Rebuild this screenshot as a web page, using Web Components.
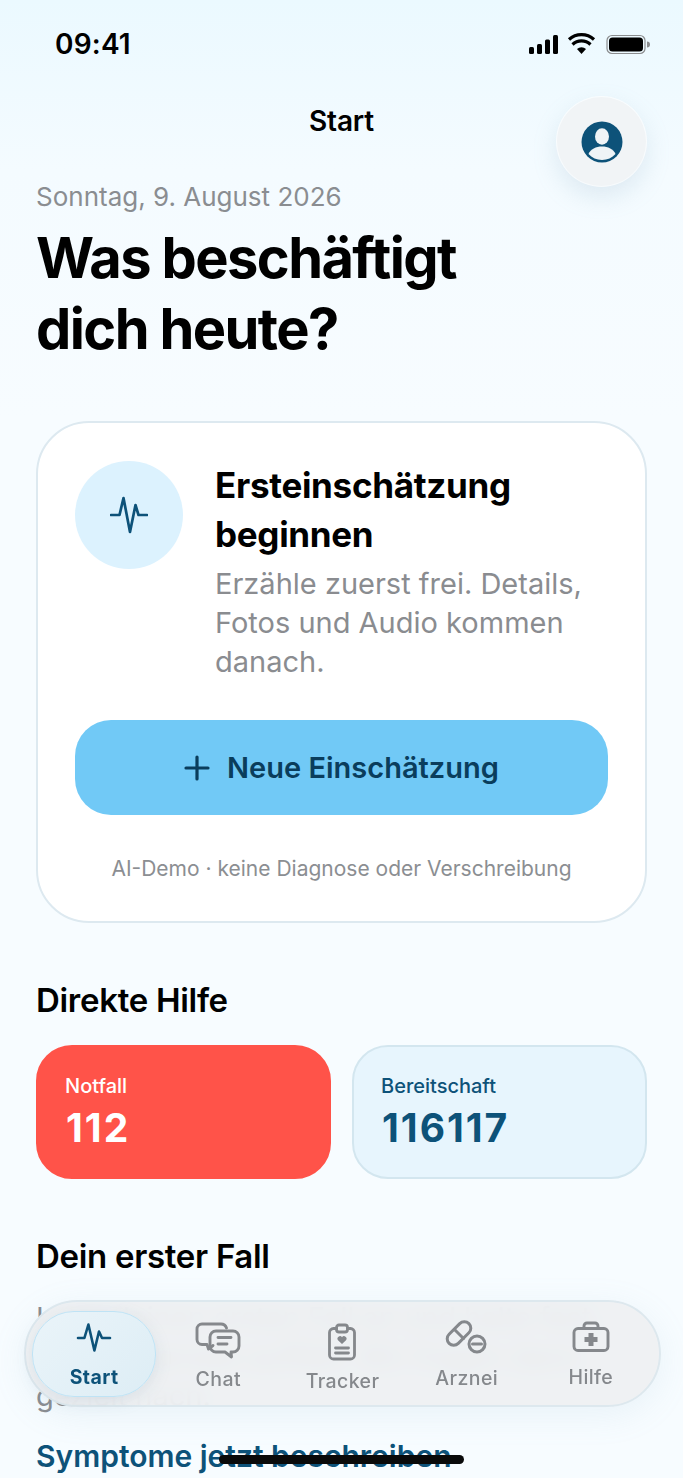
<!DOCTYPE html>
<html lang="de">
<head>
<meta charset="utf-8">
<title>Start</title>
<style>
  html, body { margin: 0; height: 100%; }
  body {
    font-family: Inter, "Liberation Sans", sans-serif;
    background: #f7fcff;
    overflow: hidden;
  }
</style>
</head>
<body>
<app-shell>
  <status-bar slot="top"></status-bar>
  <top-bar slot="top" heading="Start"></top-bar>

  <day-heading date="Sonntag, 9. August 2026">Was beschäftigt<br>dich heute?</day-heading>

  <triage-card title-text="Ersteinschätzung beginnen" note="AI-Demo · keine Diagnose oder Verschreibung" action="Neue Einschätzung">
    Erzähle zuerst frei. Details, Fotos und Audio kommen danach.
  </triage-card>

  <section-title style="margin-top:52px">Direkte Hilfe</section-title>
  <help-row>
    <help-tile kind="danger" label="Notfall" number="112"></help-tile>
    <help-tile label="Bereitschaft" number="116117"></help-tile>
  </help-row>

  <section-title style="margin-top:52px">Dein erster Fall</section-title>
  <first-case link="Symptome jetzt beschreiben">Lege deinen ersten Fall an und halte fest, was dir gerade auffällt. Wir fragen dann gezielt nach.</first-case>

  <tab-bar slot="over">
    <tab-item label="Start" icon="pulse" active></tab-item>
    <tab-item label="Chat" icon="chat" style="--shift:2px"></tab-item>
    <tab-item label="Tracker" icon="tracker" style="--shift:4px"></tab-item>
    <tab-item label="Arznei" icon="pill" style="--shift:1px"></tab-item>
    <tab-item label="Hilfe" icon="kit"></tab-item>
  </tab-bar>
  <div slot="over" style="position:absolute;left:219px;top:1455px;width:245px;height:9px;border-radius:5px;background:#0a0a0a"></div>
</app-shell>

<script>
const ICONS = {
  pulse: '<path d="M2 17.5h6.4L12.4 4l6 26 4.6-19 3 6.5H34" fill="none" stroke="currentColor" stroke-width="2.6" stroke-linecap="round" stroke-linejoin="round"/>',
  chat: '<g fill="none" stroke="currentColor" stroke-width="2.9" stroke-linejoin="round" stroke-linecap="round"><path d="M18 23.5l-4.500 3.500 -1.500-4.500H7a5 5 0 0 1-5-5V7a5 5 0 0 1 5-5h19a6 6 0 0 1 5.500 4"/><path d="M21 9h17a6 6 0 0 1 6 6v9a6 6 0 0 1-6 6h-2l.5 5-6.500-5H21a6 6 0 0 1-6-6v-9a6 6 0 0 1 6-6z"/><path d="M23 15.500h13M23 22h9"/></g>',
  tracker: '<g fill="none" stroke="currentColor" stroke-width="2.8" stroke-linecap="round" stroke-linejoin="round"><path d="M9 5.500H6a4 4 0 0 0-4 4V32a4 4 0 0 0 4 4h17a4 4 0 0 0 4-4V9.500a4 4 0 0 0-4-4h-3"/><rect x="9" y="2" width="11" height="7" rx="2.500"/><path d="M8 25h13M8 30h13"/></g><path d="M14.500 21l-4-3.800a2.500 2.500 0 0 1 4-3 2.500 2.500 0 0 1 4 3z" fill="currentColor"/>',
  pill: '<g fill="none" stroke="currentColor" stroke-width="3" stroke-linecap="round"><rect x="-2" y="7" width="28" height="13" rx="6.500" transform="rotate(-45 12 13.500)"/><path d="M7.500 9.500l9 9"/><circle cx="30" cy="24" r="8"/><path d="M25.500 24h9"/></g>',
  kit: '<g fill="none" stroke="currentColor" stroke-width="2.9" stroke-linejoin="round"><rect x="2" y="7.500" width="34" height="22" rx="4"/><path d="M12 7.500V5a3 3 0 0 1 3-3h8a3 3 0 0 1 3 3v2.500"/></g><path d="M16.500 12h5v4h4v5h-4v4h-5v-4h-4v-5h4z" fill="currentColor"/>'
};

class AppShell extends HTMLElement {
  constructor() {
    super();
    this.attachShadow({ mode: 'open' });
    this.shadowRoot.innerHTML = `
      <style>
        :host { display: block; position: relative; width: 683px; height: 1478px; overflow: hidden;
          background: linear-gradient(#ebf9ff 0, #f4fbff 170px, #f7fcff 420px); }
        .head { display: block; }
        main { padding: 0 36px; }
      </style>
      <div class="head"><slot name="top"></slot></div>
      <main><slot></slot></main>
      <slot name="over"></slot>`;
  }
}

class StatusBar extends HTMLElement {
  constructor() {
    super();
    this.attachShadow({ mode: 'open' });
    this.shadowRoot.innerHTML = `
      <style>
        :host { display: flex; justify-content: space-between; align-items: center; height: 87px; padding: 0 32px 0 55px; box-sizing: border-box; }
        time { font-size: 28px; font-weight: 600; color: #000; letter-spacing: .2px; }
        svg { display: block; }
      </style>
      <time>09:41</time>
      <svg width="123" height="22" viewBox="0 0 123 22">
        <g fill="#000">
          <rect x="1" y="14" width="5" height="7" rx="1.500"/><rect x="9" y="11" width="5" height="10" rx="1.500"/>
          <rect x="17" y="6.500" width="5" height="14.500" rx="1.500"/><rect x="25" y="2" width="5" height="19" rx="1.500"/>
          <path d="M53.500 21l-4.500-5a6.500 6.500 0 0 1 9 0z"/>
        </g>
        <g fill="none" stroke="#000" stroke-width="3.200">
          <path d="M44.500 11.500a13 13 0 0 1 18 0"/><path d="M41 6.500a18.500 18.500 0 0 1 25 0"/>
        </g>
        <rect x="79" y="2.500" width="38" height="18" rx="5" fill="none" stroke="#8b8d8f" stroke-width="1.200"/>
        <rect x="81" y="4.500" width="34" height="14" rx="3.500" fill="#000"/>
        <path d="M119 8.500a3 3 0 0 1 0 6z" fill="#8b8d8f"/>
      </svg>`;
  }
}

class TopBar extends HTMLElement {
  constructor() {
    super();
    this.attachShadow({ mode: 'open' });
    this.shadowRoot.innerHTML = `
      <style>
        :host { display: block; position: relative; height: 78px; text-align: center; }
        h1 { margin: 0; font-size: 28px; line-height: 68px; font-weight: 600; color: #000; letter-spacing: -.2px; }
        button { position: absolute; right: 37px; top: 10px; width: 89px; height: 89px; padding: 0; border: 0; border-radius: 50%;
          background: #f1f4f6; box-shadow: 0 0 0 1px rgba(255,255,255,.7), 0 10px 26px rgba(120,160,185,.2); display: grid; place-items: center; }
      </style>
      <h1></h1>
      <button aria-label="Profil">
        <svg width="42" height="42" viewBox="0 0 42 42">
          <circle cx="21" cy="21" r="20.500" fill="#0d5279"/>
          <ellipse cx="21" cy="15.500" rx="7" ry="8.200" fill="#eef3f6"/>
          <path d="M7.500 33c2-5 7.500-7.500 13.500-7.500S32.500 28 34.500 33c-3.500 3.800-8 6-13.500 6S11 36.800 7.500 33z" fill="#eef3f6"/>
        </svg>
      </button>`;
    this.shadowRoot.querySelector('h1').textContent = this.getAttribute('heading');
  }
}

class DayHeading extends HTMLElement {
  constructor() {
    super();
    this.attachShadow({ mode: 'open' });
    this.shadowRoot.innerHTML = `
      <style>
        :host { display: block; padding-top: 14px; }
        p { margin: 0; font-size: 26px; line-height: 36px; color: #8a8d91; }
        h2 { margin: 8px 0 0; font-size: 56px; line-height: 71px; font-weight: 700; letter-spacing: -1.6px; color: #000; }
      </style>
      <p></p>
      <h2><slot></slot></h2>`;
    this.shadowRoot.querySelector('p').textContent = this.getAttribute('date');
  }
}

class TriageCard extends HTMLElement {
  constructor() {
    super();
    this.attachShadow({ mode: 'open' });
    this.shadowRoot.innerHTML = `
      <style>
        :host { display: block; margin-top: 56px; box-sizing: border-box; height: 502px; padding: 38px 37px 0;
          background: #fff; border: 2px solid #dde9f0; border-radius: 53px; }
        .top { display: flex; gap: 32px; }
        .bubble { flex: none; width: 108px; height: 108px; border-radius: 50%; background: #dcf2fe; display: grid; place-items: center; }
        h3 { margin: 0; font-size: 35px; line-height: 49px; font-weight: 700; letter-spacing: -.3px; color: #000; }
        p { margin: 5px 0 0; font-size: 29px; line-height: 39px; color: #8a8c90; }
        button { display: flex; align-items: center; justify-content: center; gap: 17px; width: 100%; height: 95px; margin-top: 39px; border: 0; border-radius: 36px;
          background: #71c9f6; color: #0a3d5c; font: 600 29px Inter, "Liberation Sans", sans-serif; }
        small { display: block; margin-top: 41px; text-align: center; font-size: 21px; line-height: 26px; color: #8b8e92; }
      </style>
      <div class="top">
        <div class="bubble">
          <svg width="38" height="38" viewBox="0 0 38 38"><path d="M1 19h8.500l4-17 6.500 34 5.500-27 3 10h8.500" fill="none" stroke="#0d5279" stroke-width="2.700" stroke-linecap="round" stroke-linejoin="round"/></svg>
        </div>
        <div>
          <h3></h3>
          <p><slot></slot></p>
        </div>
      </div>
      <button>
        <svg width="26" height="26" viewBox="0 0 26 26"><path d="M13 2v22M2 13h22" stroke="#0a3d5c" stroke-width="3.200" stroke-linecap="round"/></svg>
        <span></span>
      </button>
      <small></small>`;
    this.shadowRoot.querySelector('h3').textContent = this.getAttribute('title-text');
    this.shadowRoot.querySelector('button span').textContent = this.getAttribute('action');
    this.shadowRoot.querySelector('small').textContent = this.getAttribute('note');
  }
}

class SectionTitle extends HTMLElement {
  constructor() {
    super();
    this.attachShadow({ mode: 'open' });
    this.shadowRoot.innerHTML = `
      <style>:host { display: block; font-size: 33px; line-height: 50px; font-weight: 600; letter-spacing: -.3px; color: #000; }</style>
      <slot></slot>`;
  }
}

class HelpRow extends HTMLElement {
  constructor() {
    super();
    this.attachShadow({ mode: 'open' });
    this.shadowRoot.innerHTML = `
      <style>:host { display: grid; grid-template-columns: 1fr 1fr; gap: 21px; margin-top: 20px; }</style>
      <slot></slot>`;
  }
}

class HelpTile extends HTMLElement {
  constructor() {
    super();
    this.attachShadow({ mode: 'open' });
    this.shadowRoot.innerHTML = `
      <style>
        :host { display: block; box-sizing: border-box; height: 134px; padding: 26px 27px 0; border-radius: 36px;
          background: #e7f5fd; border: 2px solid #d3e6ef; color: #0d5279; }
        :host([kind=danger]) { background: #ff5349; border-color: #ff5349; color: #fff; }
        div { font-size: 20px; line-height: 27px; font-weight: 500; }
        strong { display: block; margin: 4px 0 0 1px; font-size: 39px; line-height: 48px; font-weight: 700; letter-spacing: 2px; }
      </style>
      <div></div>
      <strong></strong>`;
    this.shadowRoot.querySelector('div').textContent = this.getAttribute('label');
    this.shadowRoot.querySelector('strong').textContent = this.getAttribute('number');
  }
}

class FirstCase extends HTMLElement {
  constructor() {
    super();
    this.attachShadow({ mode: 'open' });
    this.shadowRoot.innerHTML = `
      <style>
        :host { display: block; margin-top: 17px; }
        p { margin: 0; font-size: 29px; line-height: 39px; color: #8a8c90; }
        a { display: block; margin-top: 21px; font-size: 30px; line-height: 40px; font-weight: 600; color: #0d5279; }
      </style>
      <p><slot></slot></p>
      <a></a>`;
    this.shadowRoot.querySelector('a').textContent = this.getAttribute('link');
  }
}

class TabBar extends HTMLElement {
  constructor() {
    super();
    this.attachShadow({ mode: 'open' });
    this.shadowRoot.innerHTML = `
      <style>
        :host { position: absolute; left: 24px; top: 1300px; width: 637px; height: 107px; box-sizing: border-box; padding: 0 6px;
          display: grid; grid-template-columns: repeat(5, 1fr); align-items: stretch;
          border-radius: 54px; background: rgba(238,240,242,.93); -webkit-backdrop-filter: blur(10px); backdrop-filter: blur(10px);
          border: 2px solid #dde8ee; box-shadow: 0 8px 34px rgba(130,170,195,.12); }
      </style>
      <slot></slot>`;
  }
}

class TabItem extends HTMLElement {
  constructor() {
    super();
    this.attachShadow({ mode: 'open' });
    this.shadowRoot.innerHTML = `
      <style>
        :host { display: flex; flex-direction: column; align-items: center; justify-content: center; gap: 6px;
          font-size: 19.500px; line-height: 26px; font-weight: 500; letter-spacing: .4px; color: #85888c; transform: translateY(var(--shift, 0)); }
        :host([active]) { margin: 9px 0 8px; border-radius: 42px; background: linear-gradient(135deg, #eaf4f9, #ddedf5);
          border: 1.500px solid #bfe3f5; box-shadow: 0 4px 16px rgba(120,150,170,.18); color: #0d5279; font-weight: 700; }
        svg { display: block; height: 40px; width: 50px; }
      </style>
      <svg viewBox="0 0 50 40"></svg>
      <span></span>`;
    const name = this.getAttribute('icon');
    const inner = ICONS[name];
    const offset = { pulse: 'translate(7 2.500)', chat: 'translate(2 2)', tracker: 'translate(10.500 1)', pill: 'translate(5 1)', kit: 'translate(6 3)' }[name];
    this.shadowRoot.querySelector('svg').innerHTML = `<g transform="${offset}">${inner}</g>`;
    this.shadowRoot.querySelector('span').textContent = this.getAttribute('label');
  }
}

customElements.define('app-shell', AppShell);
customElements.define('status-bar', StatusBar);
customElements.define('top-bar', TopBar);
customElements.define('day-heading', DayHeading);
customElements.define('triage-card', TriageCard);
customElements.define('section-title', SectionTitle);
customElements.define('help-row', HelpRow);
customElements.define('help-tile', HelpTile);
customElements.define('first-case', FirstCase);
customElements.define('tab-bar', TabBar);
customElements.define('tab-item', TabItem);
</script>
</body>
</html>
